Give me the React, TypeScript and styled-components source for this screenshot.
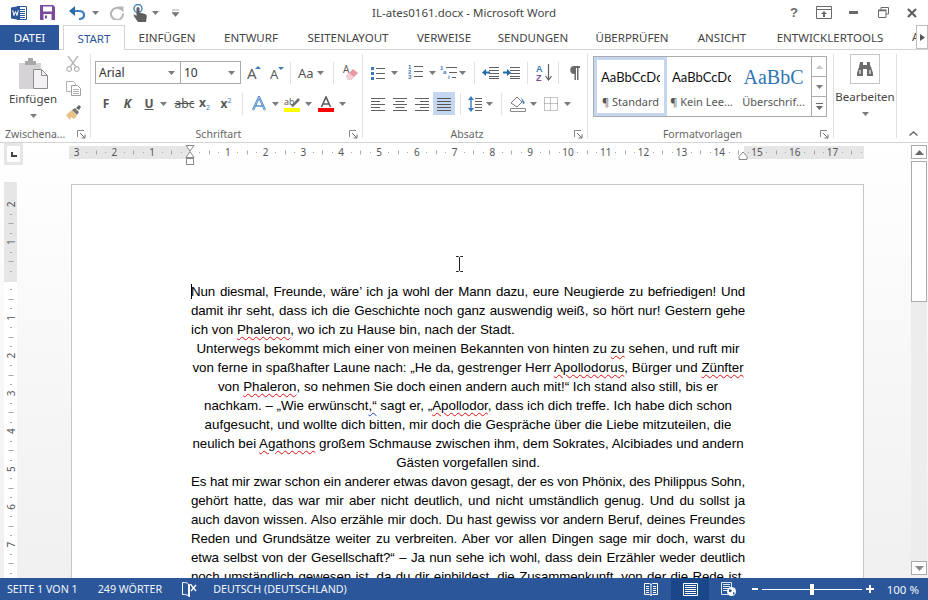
import React from "react"
import styled, { createGlobalStyle } from "styled-components"

const UI_FONT = `"Noto Sans", "Open Sans", sans-serif`
const BLUE = "#2b579a"
const ICON_BLUE = "#3d7ab8"
const ICON_GREY = "#616161"

const GlobalStyle = createGlobalStyle`
  html, body {
    margin: 0;
    padding: 0;
    background: #fff;
  }
  body {
    font-family: ${UI_FONT};
  }
`

const TABS = [
  { label: "EINFÜGEN", width: 84 },
  { label: "ENTWURF", width: 84 },
  { label: "SEITENLAYOUT", width: 110 },
  { label: "VERWEISE", width: 82 },
  { label: "SENDUNGEN", width: 96 },
  { label: "ÜBERPRÜFEN", width: 102 },
  { label: "ANSICHT", width: 78 },
  { label: "ENTWICKLERTOOLS", width: 138 },
]

type Part = { text: string; mark?: "red" | "blue" }
type Line = { parts: Part[]; align: "justify" | "center" | "left" }

const t = (text: string): Part => ({ text })
const r = (text: string): Part => ({ text, mark: "red" })
const b = (text: string): Part => ({ text, mark: "blue" })

const LINES: Line[] = [
  { align: "justify", parts: [t("Nun diesmal, Freunde, wäre’ ich ja wohl der Mann dazu, eure Neugierde zu befriedigen! Und")] },
  { align: "justify", parts: [t("damit ihr seht, dass ich die Geschichte noch ganz auswendig weiß, so hört nur! Gestern gehe")] },
  { align: "left", parts: [t("ich von "), r("Phaleron"), t(", wo ich zu Hause bin, nach der Stadt.")] },
  { align: "center", parts: [t("Unterwegs bekommt mich einer von meinen Bekannten von hinten zu "), r("zu"), t(" sehen, und ruft mir")] },
  { align: "center", parts: [t("von ferne in spaßhafter Laune nach: „He da, gestrenger Herr "), r("Apollodorus"), t(", Bürger und "), r("Zünfter")] },
  { align: "center", parts: [t("von "), r("Phaleron"), t(", so nehmen Sie doch einen andern auch mit!“ Ich stand also still, bis er")] },
  { align: "center", parts: [t("nachkam. – „Wie "), t("erwünscht"), b(",“"), t(" sagt er, „"), r("Apollodor"), t(", dass ich dich treffe. Ich habe dich schon")] },
  { align: "center", parts: [t("aufgesucht, und wollte dich bitten, mir doch die Gespräche über die Liebe mitzuteilen, die")] },
  { align: "center", parts: [t("neulich bei "), r("Agathons"), t(" großem Schmause zwischen ihm, dem Sokrates, Alcibiades und andern")] },
  { align: "center", parts: [t("Gästen vorgefallen sind.")] },
  { align: "justify", parts: [t("Es hat mir zwar schon ein anderer etwas davon gesagt, der es von Phönix, des Philippus Sohn,")] },
  { align: "justify", parts: [t("gehört hatte, das war mir aber nicht deutlich, und nicht umständlich genug. Und du sollst ja")] },
  { align: "justify", parts: [t("auch davon wissen. Also erzähle mir doch. Du hast gewiss vor andern Beruf, deines Freundes")] },
  { align: "justify", parts: [t("Reden und Grundsätze weiter zu verbreiten. Aber vor allen Dingen sage mir doch, warst du")] },
  { align: "justify", parts: [t("etwa selbst von der Gesellschaft?“ – Ja nun sehe ich wohl, dass dein Erzähler weder deutlich")] },
  { align: "justify", parts: [t("noch umständlich gewesen ist, da du dir einbildest, die Zusammenkunft, von der die Rede ist,")] },
]

const Icon: React.FC<{ w: number; h: number; children: React.ReactNode }> = ({ w, h, children }) => (
  <svg width={w} height={h} viewBox={`0 0 ${w} ${h}`} fill="none" style={{ display: "block" }}>
    {children}
  </svg>
)

const Caret: React.FC = () => (
  <Icon w={7} h={4}>
    <path d="M0 0h7L3.500 4z" fill="#7a7a7a" />
  </Icon>
)

const Launcher: React.FC = () => (
  <Icon w={9} h={9}>
    <path d="M0.5 7V0.5H7" stroke="#8a8a8a" />
    <path d="M3 3l5 5M8 4.5V8H4.5" stroke="#6e6e6e" />
  </Icon>
)

const HLines: React.FC<{ x: number; w: number; ys: number[]; color?: string }> = ({ x, w, ys, color = ICON_GREY }) => (
  <>
    {ys.map((y) => (
      <path key={y} d={`M${x} ${y + 0.5}h${w}`} stroke={color} />
    ))}
  </>
)

const WordLogo = () => (
  <Icon w={16} h={16}>
    <path d="M6 1.500h9.500v13H6" fill="#fff" stroke={BLUE} />
    <HLines x={9} w={5} ys={[4, 6, 8, 10, 12]} color={BLUE} />
    <path d="M0 2.500l9-1.500v14l-9-1.500z" fill={BLUE} />
    <path d="M1.700 5.300l1.300 5.200 1.500-4 1.500 4 1.300-5.200" stroke="#fff" strokeWidth="1" />
  </Icon>
)

const SaveIcon = () => (
  <Icon w={15} h={15}>
    <path d="M0 0h13l2 2v13H0z" fill="#7d4b9e" />
    <path d="M3 1.500h9v5H3z" fill="#fff" />
    <path d="M3.500 9h8v6h-8z" fill="#fff" />
    <path d="M5 10.500h2v3H5z" fill="#7d4b9e" />
  </Icon>
)

const UndoIcon = () => (
  <Icon w={16} h={14}>
    <path d="M3 5h7c3 0 5 1.600 5 4s-2 4-5 4" stroke="#3f7fbf" strokeWidth="2.200" />
    <path d="M6 0v10L0 5z" fill="#2b6cab" />
  </Icon>
)

const RedoIcon = () => (
  <Icon w={14} h={14}>
    <path d="M11 3.400A6 6 0 1 0 13 7.500" stroke="#b5b5b5" strokeWidth="2" />
    <path d="M7.500 .5h6v6z" fill="#b5b5b5" />
  </Icon>
)

const TouchIcon = () => (
  <Icon w={15} h={18}>
    <circle cx="5" cy="4.500" r="4" stroke="#3f7fbf" strokeWidth="1.400" />
    <path d="M3.500 4.500a1.500 1.500 0 0 1 3 0v4l5.500 1.500c1.500 .5 2 1.500 1.700 3L13 18H5L.5 11.500l1-1L3.500 12z" fill="#5f5f5f" />
  </Icon>
)

const QatMore = () => (
  <Icon w={7} h={8}>
    <path d="M0 1h7M0 3.500h7L3.500 7.500z" fill="#777" stroke="#777" strokeWidth=".6" />
  </Icon>
)

const DisplayIcon = () => (
  <Icon w={16} h={13}>
    <path d="M.5 .5h15v12H.5z" stroke="#6a6a6a" />
    <path d="M.5 3.500h15" stroke="#6a6a6a" />
    <path d="M8 5l3 3H9v3H7V8H5z" fill="#6a6a6a" />
  </Icon>
)

const MinimizeIcon = () => (
  <Icon w={9} h={3}>
    <path d="M0 0h9v3H0z" fill="#6a6a6a" />
  </Icon>
)

const RestoreIcon = () => (
  <Icon w={11} h={11}>
    <path d="M3 2.500V.5h7.500V7H8" stroke="#6a6a6a" />
    <path d="M.5 3h7.500v7.500H.5z" stroke="#6a6a6a" />
    <path d="M.5 3.500H8" stroke="#6a6a6a" strokeWidth="1.500" />
  </Icon>
)

const CloseIcon = () => (
  <Icon w={10} h={10}>
    <path d="M1 1l8 8M9 1l-8 8" stroke="#5f5f5f" strokeWidth="2.200" />
  </Icon>
)

const PasteIcon = () => (
  <Icon w={29} h={31}>
    <path d="M0 5h22v26H0z" fill="#d6d3d6" />
    <path d="M6 3h3V0h5v3h3v4H6z" fill="#a8a8a8" />
    <path d="M14.500 11.500h8l6 6v13h-14z" fill="#f4f1f6" stroke="#8c8c8c" />
    <path d="M22.500 11.500v6h6" stroke="#8c8c8c" />
  </Icon>
)

const CutIcon = () => (
  <Icon w={14} h={16}>
    <path d="M2 0l8 11M12 0L4 11" stroke="#b8b8b8" strokeWidth="1.400" />
    <circle cx="3.200" cy="13" r="2.400" stroke="#a0a0a0" />
    <circle cx="10.800" cy="13" r="2.400" stroke="#a0a0a0" />
  </Icon>
)

const CopyIcon = () => (
  <Icon w={15} h={15}>
    <path d="M.5 .5h7l2 2v8H.5z" fill="#fff" stroke="#b0b0b0" />
    <path d="M5.500 4.500h6l3 3v7h-9z" fill="#fff" stroke="#a0a0a0" />
    <HLines x={7} w={6} ys={[8, 10, 12]} color="#b0b0b0" />
  </Icon>
)

const PainterIcon = () => (
  <Icon w={16} h={15}>
    <path d="M0 10l6-5 5 6-3 3-3-2-1 3z" fill="#e8c184" />
    <path d="M6 5l3-2 4 4-2 3z" fill="#777" />
    <path d="M10 3l3-3 2 2-2 3z" fill="#666" />
  </Icon>
)

const GrowIcon: React.FC<{ down?: boolean }> = ({ down }) => (
  <Icon w={14} h={15}>
    <GlyphLetter x="0" y="14" fontSize={down ? 13 : 15}>A</GlyphLetter>
    <path d={down ? "M8 2h6l-3 3z" : "M8 4h6l-3-3z"} fill={ICON_BLUE} />
  </Icon>
)

const EraserIcon = () => (
  <Icon w={17} h={17}>
    <GlyphLetter x="1" y="9" fontSize={10}>A</GlyphLetter>
    <path d="M4 12l7-7 5 4-7 7H6z" fill="#e79aa4" />
    <path d="M4 12l3-3 5 4-3 3H6z" fill="#f4d0d4" />
  </Icon>
)

const TextEffectIcon = () => (
  <Icon w={14} h={15}>
    <path d="M1 14L7 1l6 13" stroke="#3f7fbf" strokeWidth="2.200" />
    <path d="M1 14L7 1l6 13" stroke="#cfe0f2" strokeWidth=".7" />
    <path d="M3.500 10h7" stroke="#3f7fbf" strokeWidth="1.300" />
  </Icon>
)

const HighlightIcon = () => (
  <Icon w={16} h={16}>
    <GlyphLetter x="0" y="9" fontSize={9}>ab</GlyphLetter>
    <path d="M7 10l7-8 2 2-7 7z" fill="#6e6e6e" />
    <path d="M0 12h16v4H0z" fill="#ffff00" />
  </Icon>
)

const FontColorIcon = () => (
  <Icon w={16} h={16}>
    <path d="M3.500 11L8 1l4.500 10M5 8h6" stroke="#5b5b5b" strokeWidth="1.600" />
    <path d="M0 12h16v4H0z" fill="#ff0000" />
  </Icon>
)

const BulletsIcon = () => (
  <Icon w={14} h={14}>
    {[1, 6, 11].map((y) => (
      <React.Fragment key={y}>
        <path d={`M0 ${y}h3v3H0z`} fill={ICON_BLUE} />
        <path d={`M5 ${y + 1.5}h9`} stroke={ICON_GREY} />
      </React.Fragment>
    ))}
  </Icon>
)

const NumberingIcon = () => (
  <Icon w={15} h={15}>
    {[4, 9, 14].map((y, i) => (
      <React.Fragment key={y}>
        <TinyNumber x="0" y={y}>{i + 1}</TinyNumber>
        <path d={`M6 ${y - 2.5}h9`} stroke={ICON_GREY} />
      </React.Fragment>
    ))}
  </Icon>
)

const MultilevelIcon = () => (
  <Icon w={17} h={15}>
    <TinyNumber x="0" y="5">1</TinyNumber>
    <path d="M6 2.500h11" stroke={ICON_GREY} />
    <TinyNumber x="3" y="9">a</TinyNumber>
    <path d="M9 7.500h8" stroke={ICON_GREY} />
    <TinyNumber x="8" y="14">i</TinyNumber>
    <path d="M12 12.500h4" stroke={ICON_GREY} />
  </Icon>
)

const IndentIcon: React.FC<{ increase?: boolean }> = ({ increase }) => (
  <Icon w={17} h={13}>
    <HLines x={7} w={10} ys={[1, 4, 7, 10, 12]} />
    {increase ? (
      <path d="M0 5.500h4V3l4 3.500L4 10V7.500H0z" fill="#1f6aa8" />
    ) : (
      <path d="M8 5.500H4V3L0 6.500 4 10V7.500h4z" fill="#1f6aa8" />
    )}
  </Icon>
)

const SortIcon = () => (
  <Icon w={16} h={17}>
    <SortLetter x="0" y="8" fill="#3d7ab8">A</SortLetter>
    <SortLetter x="0" y="17" fill="#7d4b9e">Z</SortLetter>
    <path d="M12.500 0v15M9.500 12l3 4 3-4" stroke="#5f5f5f" strokeWidth="1.200" />
  </Icon>
)

const PilcrowIcon = () => (
  <Icon w={11} h={14}>
    <path d="M5 0h6v2H9.500v12h-1.500V2H7v12H5.500V8A4 4 0 0 1 5 0z" fill="#6a6a6a" />
  </Icon>
)

const AlignIcon: React.FC<{ kind: "left" | "center" | "right" | "justify" }> = ({ kind }) => {
  const longW = 14
  const shortW = 9
  const ys = [1, 4, 7, 10, 13]
  return (
    <Icon w={14} h={14}>
      {ys.map((y, i) => {
        const w = kind === "justify" || i % 2 === 0 ? longW : shortW
        const x = kind === "left" || kind === "justify" ? 0 : kind === "center" ? (longW - w) / 2 : longW - w
        return <path key={y} d={`M${x} ${y + 0.5}h${w}`} stroke={kind === "justify" ? "#555" : ICON_GREY} />
      })}
    </Icon>
  )
}

const LineSpacingIcon = () => (
  <Icon w={14} h={16}>
    <path d="M3 2v12" stroke={ICON_BLUE} strokeWidth="1.400" />
    <path d="M0 4l3-4 3 4zM0 12l3 4 3-4z" fill={ICON_BLUE} />
    <HLines x={7} w={7} ys={[2, 5, 8, 11, 14]} />
  </Icon>
)

const ShadingIcon = () => (
  <Icon w={16} h={16}>
    <path d="M1 7l6-6 5 5-5 5z" stroke="#7a7a7a" fill="#fff" />
    <path d="M11 1l4 6-2 1z" fill="#3d7ab8" />
    <path d="M.5 12.500h15v3H.5z" fill="#fff" stroke="#8a8a8a" />
  </Icon>
)

const BordersIcon = () => (
  <Icon w={14} h={14}>
    <path d="M.5 .5h13v13H.5zM6.500 .5v13M.5 6.500h13" stroke="#8a8a8a" strokeDasharray="1 1" />
  </Icon>
)

const BinocularsIcon = () => (
  <Icon w={16} h={14}>
    <path d="M3 0h3v3h4V0h3v3l1 2 2 6v3H10V7H6v7H0v-3l2-6z" fill="#6b6b6b" />
    <path d="M2 8h2v4H2zM12 8h2v4h-2z" fill="#bdbdbd" />
  </Icon>
)

const ProofIcon = () => (
  <Icon w={15} h={16}>
    <path d="M6.500 3C5 1.500 3 1.500 .5 1.500v12c2.500 0 4.500 0 6 1.500V3z" stroke="#fff" />
    <path d="M6.500 15l1 1V3.500h2" stroke="#fff" />
    <path d="M9 4l5 6M14 4L9 10" stroke="#fff" strokeWidth="1.300" />
  </Icon>
)

const ReadIcon = () => (
  <Icon w={14} h={15}>
    <path d="M.5 1.500h5l1.500 1 1.500-1h5v11h-5L7 13.500l-1.500-1h-5z" stroke="#fff" />
    <path d="M7 2.500v11" stroke="#fff" />
    <HLines x={2} w={3} ys={[4, 6, 8, 10]} color="#fff" />
    <HLines x={9} w={3} ys={[4, 6, 8, 10]} color="#fff" />
  </Icon>
)

const PrintIcon = () => (
  <Icon w={15} h={13}>
    <path d="M.5 .5h14v12H.5z" stroke="#fff" />
    <HLines x={2} w={11} ys={[2, 4, 6, 8, 10]} color="#fff" />
  </Icon>
)

const WebIcon = () => (
  <Icon w={15} h={14}>
    <path d="M7 12.500H.5V.5h10V5" stroke="#dce6f2" />
    <HLines x={2} w={7} ys={[2, 4, 6, 8]} color="#dce6f2" />
    <circle cx="10.500" cy="9.500" r="4.500" fill="#fff" />
    <path d="M8 7l3 1-1 2-2 0zM12 10l2 1-2 2z" fill={BLUE} />
  </Icon>
)

const HOverflow = () => (
  <Icon w={5} h={7}>
    <path d="M0 0l5 3.500L0 7z" fill="#555" />
  </Icon>
)

const IBeam = () => (
  <Icon w={9} h={16}>
    <path d="M1 .5h2.500l1 1 1-1H8M4.500 1.500v13M1 15.500h2.500l1-1 1 1H8" stroke="#222" />
  </Icon>
)

const CM = 37.8
const ZERO = 121

const HorizontalRuler = () => {
  const ticks: React.ReactNode[] = []
  for (let i = -3; i <= 17; i++) {
    const x = ZERO + i * CM
    if (i !== 0) {
      ticks.push(
        <RulerNumber key={"n" + i} x={x} y={13} textAnchor="middle">
          {Math.abs(i)}
        </RulerNumber>
      )
    }
    for (const [f, len] of [[0.25, 1], [0.5, 4], [0.75, 1]] as const) {
      const tx = Math.round(x + f * CM)
      if (tx > 795) continue
      ticks.push(<path key={`t${i}${f}`} d={`M${tx + 0.5} ${9 - len / 2 + 0.5}v${len}`} stroke="#a8a8a8" />)
    }
  }
  return (
    <svg width={800} height={24} viewBox="0 0 800 24" style={{ display: "block", overflow: "visible" }}>
      <rect x="0" y="3" width="795" height="13" fill="#fff" />
      <rect x="0" y="3" width="121" height="13" fill="#e6e6e6" />
      <rect x="675" y="3" width="120" height="13" fill="#e6e6e6" />
      {ticks}
      <path d="M117 2.500h8l-4 5.500zM117 14.500h8l-4-6z" fill="#fff" stroke="#8a8a8a" />
      <rect x="117.500" y="15.500" width="7" height="6" fill="#fff" stroke="#8a8a8a" />
      <path d="M670 16.500v-3l4-4.500 4 4.500v3z" fill="#fff" stroke="#8a8a8a" />
    </svg>
  )
}

const VerticalRuler = () => {
  const nodes: React.ReactNode[] = []
  const top = 98
  for (let i = -2; i <= 8; i++) {
    const y = top + i * CM
    if (i !== 0) {
      nodes.push(
        <RulerNumber key={"n" + i} x={7} y={y} textAnchor="middle" dominantBaseline="central" transform={`rotate(-90 7 ${y})`}>
          {Math.abs(i)}
        </RulerNumber>
      )
    }
    for (const [f, len] of [[0.25, 2], [0.5, 5], [0.75, 2]] as const) {
      const ty = Math.round(y + f * CM)
      nodes.push(<path key={`t${i}${f}`} d={`M${7 - len / 2} ${ty + 0.5}h${len}`} stroke="#a8a8a8" />)
    }
  }
  return (
    <svg width={13} height={396} viewBox="0 0 13 396" style={{ display: "block" }}>
      <rect x="0" y="0" width="13" height="396" fill="#fff" />
      <rect x="0" y="0" width="13" height="100" fill="#e6e6e6" />
      {nodes}
    </svg>
  )
}

export default function App() {
  return (
    <>
      <GlobalStyle />
      <Window>
        <TitleBar>
          <Qat>
            <QatSlot $w={18} $ml={10}><WordLogo /></QatSlot>
            <QatSlot $w={15} $ml={12}><SaveIcon /></QatSlot>
            <QatSlot $w={16} $ml={14}><UndoIcon /></QatSlot>
            <QatSlot $w={7} $ml={7}><Caret /></QatSlot>
            <QatSlot $w={14} $ml={11}><RedoIcon /></QatSlot>
            <QatSlot $w={15} $ml={9}><TouchIcon /></QatSlot>
            <QatSlot $w={7} $ml={4}><Caret /></QatSlot>
            <QatSlot $w={7} $ml={13}><QatMore /></QatSlot>
          </Qat>
          <DocTitle>IL-ates0161.docx - Microsoft Word</DocTitle>
          <WindowButtons>
            <WinSlot $w={14}><HelpMark>?</HelpMark></WinSlot>
            <WinSlot $w={16} $ml={15}><DisplayIcon /></WinSlot>
            <WinSlot $w={9} $ml={17}><MinimizeIcon /></WinSlot>
            <WinSlot $w={11} $ml={20}><RestoreIcon /></WinSlot>
            <WinSlot $w={10} $ml={18}><CloseIcon /></WinSlot>
          </WindowButtons>
        </TitleBar>

        <TabBar>
          <FileTab>DATEI</FileTab>
          <ActiveTab>START</ActiveTab>
          {TABS.map((tab) => (
            <Tab key={tab.label} $w={tab.width}>{tab.label}</Tab>
          ))}
          <ClippedTab>A</ClippedTab>
          <TabScroll><HOverflow /></TabScroll>
        </TabBar>

        <Ribbon>
          <Group $w={91}>
            <GroupBody>
              <ClipboardBody>
                <PasteButton>
                  <PasteIcon />
                  <BigLabel>Einfügen</BigLabel>
                  <Caret />
                </PasteButton>
                <ClipTools>
                  <CutIcon />
                  <CopyIcon />
                  <PainterIcon />
                </ClipTools>
              </ClipboardBody>
            </GroupBody>
            <GroupFooter>
              <FooterLeft>Zwischena...</FooterLeft>
              <LauncherSlot><Launcher /></LauncherSlot>
            </GroupFooter>
          </Group>

          <Group $w={272}>
            <GroupBody>
              <Rows $pl={4}>
                <ToolRow $top={7}>
                  <Combo $w={86}>
                    <ComboText>Arial</ComboText>
                    <Caret />
                  </Combo>
                  <Combo $w={61} $joined>
                    <ComboText>10</ComboText>
                    <Caret />
                  </Combo>
                  <Tool $w={14} $ml={6}><GrowIcon /></Tool>
                  <Tool $w={14} $ml={9}><GrowIcon down /></Tool>
                  <Sep $ml={6} />
                  <AaLabel>Aa</AaLabel>
                  <Tool $w={7} $ml={3}><Caret /></Tool>
                  <Sep $ml={9} />
                  <Tool $w={17} $ml={8}><EraserIcon /></Tool>
                </ToolRow>
                <ToolRow $top={8}>
                  <LetterTool $w={22}><b>F</b></LetterTool>
                  <LetterTool $w={21}><b><i>K</i></b></LetterTool>
                  <LetterTool $w={22}><Under>U</Under></LetterTool>
                  <Tool $w={7}><Caret /></Tool>
                  <LetterTool $w={29} $ml={3} $strike>abc</LetterTool>
                  <LetterTool $w={11}><b>x</b><Sub>2</Sub></LetterTool>
                  <LetterTool $w={32}><b>x</b><Sup>2</Sup></LetterTool>
                  <Sep $ml={0} />
                  <Tool $w={14} $ml={9}><TextEffectIcon /></Tool>
                  <Tool $w={7} $ml={6}><Caret /></Tool>
                  <Tool $w={16} $ml={5}><HighlightIcon /></Tool>
                  <Tool $w={7} $ml={5}><Caret /></Tool>
                  <Tool $w={16} $ml={6}><FontColorIcon /></Tool>
                  <Tool $w={7} $ml={5}><Caret /></Tool>
                </ToolRow>
              </Rows>
            </GroupBody>
            <GroupFooter>
              <FooterCenter>Schriftart</FooterCenter>
              <LauncherSlot><Launcher /></LauncherSlot>
            </GroupFooter>
          </Group>

          <Group $w={225}>
            <GroupBody>
              <Rows $pl={8}>
                <ToolRow $top={7}>
                  <Tool $w={14}><BulletsIcon /></Tool>
                  <Tool $w={7} $ml={6}><Caret /></Tool>
                  <Tool $w={15} $ml={10}><NumberingIcon /></Tool>
                  <Tool $w={7} $ml={6}><Caret /></Tool>
                  <Tool $w={17} $ml={4}><MultilevelIcon /></Tool>
                  <Tool $w={7} $ml={2}><Caret /></Tool>
                  <Sep $ml={8} />
                  <Tool $w={17} $ml={7}><IndentIcon /></Tool>
                  <Tool $w={17} $ml={4}><IndentIcon increase /></Tool>
                  <Sep $ml={7} />
                  <Tool $w={16} $ml={8}><SortIcon /></Tool>
                  <Sep $ml={6} />
                  <Tool $w={11} $ml={10}><PilcrowIcon /></Tool>
                </ToolRow>
                <ToolRow $top={8}>
                  <Tool $w={14}><AlignIcon kind="left" /></Tool>
                  <Tool $w={14} $ml={8}><AlignIcon kind="center" /></Tool>
                  <Tool $w={14} $ml={8}><AlignIcon kind="right" /></Tool>
                  <ActiveTool><AlignIcon kind="justify" /></ActiveTool>
                  <Sep $ml={5} />
                  <Tool $w={14} $ml={7}><LineSpacingIcon /></Tool>
                  <Tool $w={7} $ml={4}><Caret /></Tool>
                  <Sep $ml={8} />
                  <Tool $w={16} $ml={8}><ShadingIcon /></Tool>
                  <Tool $w={7} $ml={4}><Caret /></Tool>
                  <Tool $w={14} $ml={7}><BordersIcon /></Tool>
                  <Tool $w={7} $ml={6}><Caret /></Tool>
                </ToolRow>
              </Rows>
            </GroupBody>
            <GroupFooter>
              <FooterCenter>Absatz</FooterCenter>
              <LauncherSlot><Launcher /></LauncherSlot>
            </GroupFooter>
          </Group>

          <Group $w={246}>
            <GroupBody>
              <Gallery>
                <StyleItem $w={73} $selected>
                  <StyleSample>AaBbCcDc</StyleSample>
                  <StyleName>¶ Standard</StyleName>
                </StyleItem>
                <StyleItem $w={69}>
                  <StyleSample>AaBbCcDc</StyleSample>
                  <StyleName>¶ Kein Lee...</StyleName>
                </StyleItem>
                <StyleItem $w={75}>
                  <HeadingSample>AaBbC</HeadingSample>
                  <StyleName>Überschrif...</StyleName>
                </StyleItem>
                <GalleryScroll>
                  <ScrollCell><Icon w={7} h={4}><path d="M0 4h7L3.500 0z" fill="#c8c8c8" /></Icon></ScrollCell>
                  <ScrollCell><Caret /></ScrollCell>
                  <ScrollCell>
                    <Icon w={7} h={7}>
                      <path d="M0 .5h7" stroke="#6a6a6a" />
                      <path d="M0 3h7L3.500 7z" fill="#6a6a6a" />
                    </Icon>
                  </ScrollCell>
                </GalleryScroll>
              </Gallery>
            </GroupBody>
            <GroupFooter>
              <FooterCenter>Formatvorlagen</FooterCenter>
              <LauncherSlot><Launcher /></LauncherSlot>
            </GroupFooter>
          </Group>

          <EditGroup>
            <EditButton><BinocularsIcon /></EditButton>
            <BigLabel>Bearbeiten</BigLabel>
            <Caret />
          </EditGroup>

          <CollapseSlot>
            <Icon w={9} h={5}>
              <path d="M.5 4.500l4-3.500 4 3.500" stroke="#666" strokeWidth="1.400" />
            </Icon>
          </CollapseSlot>
        </Ribbon>

        <Workspace>
          <MainColumn>
            <RulerRow>
              <TabSelector><TabGlyph /></TabSelector>
              <HorizontalRuler />
            </RulerRow>
            <DocRow>
              <VerticalRuler />
              <Page>
                <PageCursor />
                {LINES.map((line, i) => (
                  <TextLine key={i} $align={line.align}>
                    {line.parts.map((part, j) =>
                      part.mark ? (
                        <Marked key={j} $color={part.mark === "red" ? "#e01010" : "#1c3fd0"}>{part.text}</Marked>
                      ) : (
                        <span key={j}>{part.text}</span>
                      )
                    )}
                  </TextLine>
                ))}
                <MouseCursor><IBeam /></MouseCursor>
              </Page>
            </DocRow>
          </MainColumn>
          <Scrollbar>
            <ScrollButton>
              <Icon w={9} h={5}><path d="M0 5h9L4.500 0z" fill="#6a6a6a" /></Icon>
            </ScrollButton>
            <ScrollThumb />
            <ScrollTrack />
            <ScrollButton>
              <Icon w={9} h={5}><path d="M0 0h9L4.500 5z" fill="#8a8a8a" /></Icon>
            </ScrollButton>
          </Scrollbar>
        </Workspace>

        <StatusBar>
          <StatusText $ml={7}>SEITE 1 VON 1</StatusText>
          <StatusText $ml={20}>249 WÖRTER</StatusText>
          <StatusIcon $ml={20}><ProofIcon /></StatusIcon>
          <StatusText $ml={16}>DEUTSCH (DEUTSCHLAND)</StatusText>
          <StatusRight>
            <ViewButton $w={40}><ReadIcon /></ViewButton>
            <ViewButton $w={38} $active><PrintIcon /></ViewButton>
            <ViewButton $w={39}><WebIcon /></ViewButton>
            <ZoomSign $ml={4}>
              <Icon w={6} h={2}><path d="M0 0h6v2H0z" fill="#fff" /></Icon>
            </ZoomSign>
            <ZoomSlider>
              <ZoomThumb />
            </ZoomSlider>
            <ZoomSign $ml={4}>
              <Icon w={8} h={8}><path d="M3 0h2v3h3v2H5v3H3V5H0V3h3z" fill="#fff" /></Icon>
            </ZoomSign>
            <ZoomPercent>100 %</ZoomPercent>
          </StatusRight>
        </StatusBar>
      </Window>
    </>
  )
}

const Window = styled.div`
  width: 928px;
  height: 600px;
  display: flex;
  flex-direction: column;
  overflow: hidden;
  background: #fff;
  color: #444;
`

const TitleBar = styled.div`
  height: 25px;
  flex: none;
  display: grid;
  grid-template-columns: 1fr auto 1fr;
  align-items: center;
`

const Qat = styled.div`
  display: flex;
  align-items: center;
`

const QatSlot = styled.div<{ $w: number; $ml: number }>`
  width: ${(p) => p.$w}px;
  margin-left: ${(p) => p.$ml}px;
  display: flex;
  justify-content: center;
`

const DocTitle = styled.div`
  font-size: 11.5px;
  color: #444;
  white-space: nowrap;
`

const WindowButtons = styled.div`
  display: flex;
  align-items: center;
  justify-content: flex-end;
  padding-right: 11px;
`

const WinSlot = styled.div<{ $w: number; $ml?: number }>`
  width: ${(p) => p.$w}px;
  margin-left: ${(p) => p.$ml ?? 0}px;
  display: flex;
  justify-content: center;
`

const HelpMark = styled.span`
  font: bold 13px "Liberation Sans", sans-serif;
  color: #6a6a6a;
  line-height: 13px;
`

const TabBar = styled.div`
  height: 25px;
  flex: none;
  display: flex;
  box-sizing: border-box;
  border-bottom: 1px solid #d4d4d4;
  position: relative;
`

const FileTab = styled.div`
  width: 59px;
  height: 25px;
  background: ${BLUE};
  color: #fff;
  font-size: 11.5px;
  display: flex;
  align-items: center;
  justify-content: center;
`

const ActiveTab = styled.div`
  width: 62px;
  height: 25px;
  margin-left: 4px;
  box-sizing: border-box;
  border: 1px solid #d4d4d4;
  border-bottom: none;
  background: #fff;
  color: ${BLUE};
  font-size: 11.5px;
  display: flex;
  align-items: center;
  justify-content: center;
`

const Tab = styled.div<{ $w: number }>`
  width: ${(p) => p.$w}px;
  flex: none;
  display: flex;
  align-items: center;
  justify-content: center;
  font-size: 11.5px;
  color: #444;
  white-space: nowrap;
`

const ClippedTab = styled.div`
  flex: 1;
  min-width: 0;
  font-size: 11.5px;
  line-height: 24px;
  padding-left: 13px;
  color: #444;
`

const TabScroll = styled.div`
  position: absolute;
  right: 0;
  top: 0;
  width: 12px;
  height: 24px;
  background: #fff;
  border: 1px solid #bdbdbd;
  box-sizing: border-box;
  display: flex;
  align-items: center;
  justify-content: center;
`

const Ribbon = styled.div`
  height: 93px;
  flex: none;
  display: flex;
  box-sizing: border-box;
  border-bottom: 1px solid #d4d4d4;
  position: relative;
`

const Group = styled.div<{ $w: number }>`
  width: ${(p) => p.$w}px;
  flex: none;
  box-sizing: border-box;
  border-right: 1px solid #e1e1e1;
  margin: 4px 0;
  display: flex;
  flex-direction: column;
`

const GroupBody = styled.div`
  flex: 1;
  min-height: 0;
`

const GroupFooter = styled.div`
  height: 11px;
  flex: none;
  position: relative;
  font-size: 10.5px;
  line-height: 15px;
  color: #666;
`

const FooterLeft = styled.div`
  padding-left: 5px;
  white-space: nowrap;
`

const FooterCenter = styled.div`
  text-align: center;
  padding-right: 16px;
`

const LauncherSlot = styled.div`
  position: absolute;
  right: 4px;
  top: 3px;
`

const ClipboardBody = styled.div`
  display: flex;
`

const PasteButton = styled.div`
  width: 66px;
  display: flex;
  flex-direction: column;
  align-items: center;
  padding-top: 4px;
`

const BigLabel = styled.div`
  font-size: 11.5px;
  line-height: 16px;
  color: #444;
  margin: 2px 0 7px;
  white-space: nowrap;
`

const ClipTools = styled.div`
  display: flex;
  flex-direction: column;
  gap: 9px;
  padding-top: 2px;
`

const Rows = styled.div<{ $pl: number }>`
  padding-left: ${(p) => p.$pl}px;
`

const ToolRow = styled.div<{ $top: number }>`
  display: flex;
  align-items: center;
  height: 23px;
  margin-top: ${(p) => p.$top}px;
`

const Combo = styled.div<{ $w: number; $joined?: boolean }>`
  width: ${(p) => p.$w}px;
  height: 23px;
  box-sizing: border-box;
  border: 1px solid #ababab;
  margin-left: ${(p) => (p.$joined ? "-1px" : "0")};
  display: flex;
  align-items: center;
  justify-content: space-between;
  padding: 0 5px 0 3px;
  background: #fff;
`

const ComboText = styled.span`
  font-size: 12px;
  color: #333;
`

const Tool = styled.div<{ $w: number; $ml?: number }>`
  width: ${(p) => p.$w}px;
  margin-left: ${(p) => p.$ml ?? 0}px;
  flex: none;
  display: flex;
  justify-content: center;
  align-items: center;
`

const ActiveTool = styled.div`
  width: 22px;
  height: 23px;
  margin-left: 4px;
  background: #c5d7f0;
  display: flex;
  align-items: center;
  justify-content: center;
  flex: none;
`

const Sep = styled.div<{ $ml: number }>`
  width: 1px;
  height: 22px;
  margin-left: ${(p) => p.$ml}px;
  background: #e1e1e1;
  flex: none;
`

const AaLabel = styled.span`
  font-size: 13px;
  color: #555;
  margin-left: 7px;
`

const LetterTool = styled.div<{ $w: number; $ml?: number; $strike?: boolean }>`
  width: ${(p) => p.$w}px;
  margin-left: ${(p) => p.$ml ?? 0}px;
  flex: none;
  text-align: center;
  font: 12px "Noto Sans", sans-serif;
  color: #555;
  text-decoration: ${(p) => (p.$strike ? "line-through" : "none")};
`

const Under = styled.b`
  text-decoration: underline;
`

const Sub = styled.sub`
  font-size: 7px;
  color: ${ICON_BLUE};
`

const Sup = styled.sup`
  font-size: 7px;
  color: ${ICON_BLUE};
`

const GlyphLetter = styled.text`
  font-family: "Noto Sans", sans-serif;
  fill: #5b5b5b;
`

const TinyNumber = styled.text`
  font: bold 6px "Liberation Sans", sans-serif;
  fill: ${ICON_BLUE};
`

const SortLetter = styled.text`
  font: bold 9px "Liberation Sans", sans-serif;
`

const Gallery = styled.div`
  display: flex;
  box-sizing: border-box;
  width: 234px;
  height: 61px;
  margin: 2px 0 0 5px;
  border: 1px solid #ababab;
  background: #fff;
`

const StyleItem = styled.div<{ $w: number; $selected?: boolean }>`
  width: ${(p) => p.$w}px;
  flex: none;
  box-sizing: border-box;
  border: 3px solid ${(p) => (p.$selected ? "#c5d7f0" : "transparent")};
  display: flex;
  flex-direction: column;
  align-items: center;
  overflow: hidden;
`

const StyleSample = styled.div`
  width: 59px;
  height: 31px;
  margin-top: 2px;
  overflow: hidden;
  font: 13px/31px Lato, "Noto Sans", sans-serif;
  color: #111;
  white-space: nowrap;
`

const HeadingSample = styled.div`
  height: 31px;
  margin-top: 2px;
  font: 20px/31px "Liberation Serif", serif;
  color: #2e74b5;
  white-space: nowrap;
`

const StyleName = styled.div`
  font-size: 11px;
  line-height: 16px;
  margin-top: 1px;
  color: #555;
  white-space: nowrap;
`

const GalleryScroll = styled.div`
  flex: 1;
  display: flex;
  flex-direction: column;
  border-left: 1px solid #ababab;
`

const ScrollCell = styled.div`
  flex: 1;
  display: flex;
  align-items: center;
  justify-content: center;
  border-bottom: 1px solid #ababab;
  &:last-child {
    border-bottom: none;
  }
`

const EditGroup = styled.div`
  width: 63px;
  flex: none;
  box-sizing: border-box;
  margin: 4px 0;
  border-right: 1px solid #e1e1e1;
  display: flex;
  flex-direction: column;
  align-items: center;
`

const EditButton = styled.div`
  width: 30px;
  height: 30px;
  box-sizing: border-box;
  border: 1px solid #c6c6c6;
  display: flex;
  align-items: center;
  justify-content: center;
  margin-bottom: 3px;
`

const CollapseSlot = styled.div`
  position: absolute;
  right: 10px;
  bottom: 6px;
`

const Workspace = styled.div`
  flex: 1;
  min-height: 0;
  overflow: hidden;
  display: flex;
  background: linear-gradient(#ffffff, #f0f0f0);
`

const MainColumn = styled.div`
  flex: 1;
  min-width: 0;
  min-height: 0;
  display: flex;
  flex-direction: column;
`

const RulerRow = styled.div`
  height: 39px;
  flex: none;
  display: flex;
  align-items: flex-start;
  padding-left: 4px;
  gap: 46px;
`

const TabSelector = styled.div`
  width: 19px;
  height: 22px;
  box-sizing: border-box;
  border: 3px solid #e6e6e6;
  background: #fff;
  display: flex;
  align-items: center;
  justify-content: center;
`

const TabGlyph = styled.div`
  width: 6px;
  height: 5px;
  border-left: 2px solid #444;
  border-bottom: 2px solid #444;
  box-sizing: border-box;
`

const DocRow = styled.div`
  flex: 1;
  min-height: 0;
  display: flex;
  align-items: flex-start;
  padding-left: 4px;
  gap: 54px;
`

const Page = styled.div`
  width: 793px;
  height: 560px;
  flex: none;
  box-sizing: border-box;
  margin-top: 2px;
  border: 1px solid #c6c6c6;
  background: #fff;
  padding: 97px 118px 0 119px;
  position: relative;
`

const PageCursor = styled.div`
  position: absolute;
  left: 119px;
  top: 99px;
  width: 1px;
  height: 15px;
  background: #000;
`

const MouseCursor = styled.div`
  position: absolute;
  left: 383px;
  top: 71px;
`

const TextLine = styled.div<{ $align: "justify" | "center" | "left" }>`
  height: 19px;
  font: 13.33px/19px "Liberation Sans", Arial, sans-serif;
  color: #000;
  white-space: nowrap;
  letter-spacing: ${(p) => (p.$align === "justify" ? "-0.11px" : "0")};
  text-align: ${(p) => p.$align};
  text-align-last: ${(p) => p.$align};
`

const Marked = styled.span<{ $color: string }>`
  text-decoration: underline wavy ${(p) => p.$color} 1px;
  text-underline-offset: 2px;
`

const Scrollbar = styled.div`
  width: 17px;
  flex: none;
  display: flex;
  flex-direction: column;
  box-sizing: border-box;
  padding: 2px 1px 3px 0;
`

const ScrollButton = styled.div`
  height: 14px;
  flex: none;
  box-sizing: border-box;
  border: 1px solid #ababab;
  background: #fff;
  display: flex;
  align-items: center;
  justify-content: center;
`

const ScrollThumb = styled.div`
  height: 141px;
  flex: none;
  margin-top: 2px;
  box-sizing: border-box;
  border: 1px solid #ababab;
  background: #fff;
`

const ScrollTrack = styled.div`
  flex: 1;
  background: #ededed;
`

const RulerNumber = styled.text`
  font: 10px "Noto Sans", sans-serif;
  fill: #555;
`

const StatusBar = styled.div`
  height: 22px;
  flex: none;
  background: ${BLUE};
  display: flex;
  align-items: center;
  color: #fff;
`

const StatusText = styled.span<{ $ml: number }>`
  margin-left: ${(p) => p.$ml}px;
  font-size: 10.7px;
  color: #f2f5fa;
  white-space: nowrap;
`

const StatusIcon = styled.div<{ $ml: number }>`
  margin-left: ${(p) => p.$ml}px;
`

const StatusRight = styled.div`
  margin-left: auto;
  display: flex;
  align-items: center;
  height: 100%;
`

const ViewButton = styled.div<{ $w: number; $active?: boolean }>`
  width: ${(p) => p.$w}px;
  height: 100%;
  background: ${(p) => (p.$active ? "#19478a" : "transparent")};
  display: flex;
  align-items: center;
  justify-content: center;
`

const ZoomSign = styled.div<{ $ml: number }>`
  margin-left: ${(p) => p.$ml}px;
`

const ZoomSlider = styled.div`
  width: 100px;
  height: 1px;
  margin-left: 4px;
  background: #fff;
  position: relative;
`

const ZoomThumb = styled.div`
  position: absolute;
  left: 48px;
  top: -5px;
  width: 4px;
  height: 11px;
  background: #fff;
`

const ZoomPercent = styled.span`
  width: 54px;
  box-sizing: border-box;
  padding-right: 9px;
  text-align: right;
  font-size: 11.5px;
  color: #f2f5fa;
`
